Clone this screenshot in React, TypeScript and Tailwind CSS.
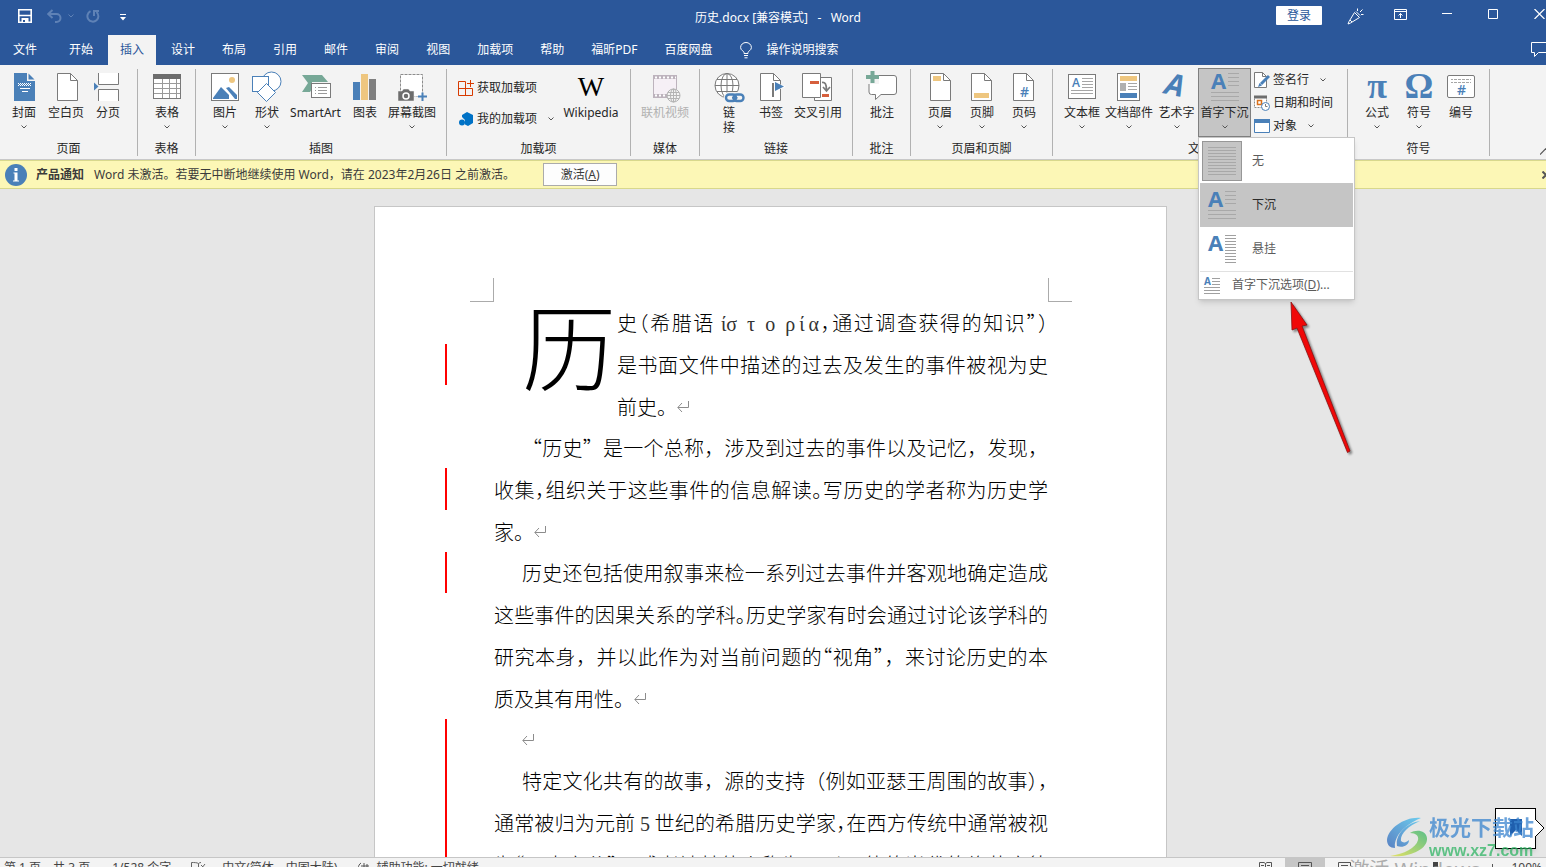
import { ReactNode } from "react";
import clsx from "clsx";

const BLUE = "#4a80b8";
const GRAY = "#7a7a7a";

/* ---------- ribbon icons, 32x32 ---------- */

function Icon32({ children }: { children: ReactNode }) {
  return (
    <svg width="32" height="32" viewBox="0 0 32 32" fill="none" className="block shrink-0 overflow-visible" aria-hidden="true">
      {children}
    </svg>
  );
}

function PageShape({ x = 6 }: { x?: number }) {
  return (
    <g transform={`translate(${x} 2)`} stroke={GRAY}>
      <path d="M.5 .5H13.500L20.500 7.500V27.500H.5Z" fill="#fff" />
      <path d="M13.500 .5V7.500H20.500" />
    </g>
  );
}

const CoverIcon = () => (
  <Icon32>
    <path d="M6 2H19V10H27V30H6Z" fill={BLUE} />
    <path d="M20.500 2.500L26.500 8.500H20.500Z" fill={BLUE} />
    <path d="M10 12.500H23M10 14.500H23" stroke="#fff" strokeDasharray="1 1" />
    <path d="M11 13.500H23" stroke="#fff" strokeDasharray="1 1" />
    <path d="M12 17.500H22M14 20.500H20" stroke="#fff" />
  </Icon32>
);

const BlankIcon = () => (
  <Icon32>
    <PageShape x={7} />
  </Icon32>
);

const BreakIcon = () => (
  <Icon32>
    <path d="M6.500 2V13.500H26.500V2" fill="#fff" stroke={GRAY} />
    <path d="M6.500 30V18.500H26.500V30" fill="#fff" stroke={GRAY} />
    <path d="M2 11.500L6.500 15.500L2 19.500Z" fill={BLUE} />
  </Icon32>
);

const TableIcon = () => (
  <Icon32>
    <rect x="2.500" y="3.500" width="27" height="24" fill="#fff" stroke={GRAY} />
    <rect x="2" y="3" width="28" height="5" fill="#6d6d6d" />
    <path d="M3 12.500H29M3 17.500H29M3 22.500H29M11.500 8V27M18.500 8V27M25.500 8V27" stroke="#9a9a9a" />
  </Icon32>
);

const PictureIcon = () => (
  <Icon32>
    <rect x="2.500" y="2.500" width="27" height="27" fill="#fff" stroke={GRAY} />
    <circle cx="23" cy="9" r="3" fill="#eec67f" />
    <path d="M4 27L12 16L20 24V28H4Z" fill={BLUE} />
    <path d="M17 17L20 16L28 24V28H26Z" fill={BLUE} />
  </Icon32>
);

const ShapesIcon = () => (
  <Icon32>
    <circle cx="20.500" cy="10.500" r="9.500" fill="#fff" stroke={BLUE} />
    <rect x="1.500" y="5.500" width="16" height="15" fill="#fff" stroke={BLUE} />
    <path d="M15.500 12.500L24.500 21.500L15.500 30.500L6.500 21.500Z" fill="#fff" stroke={BLUE} />
  </Icon32>
);

const SmartArtIcon = () => (
  <Icon32>
    <path d="M2 4H22L28 11H12V18L10 21H2L8 12Z" fill="#77a897" />
    <rect x="11.500" y="12.500" width="19" height="14" fill="#fff" stroke={GRAY} />
    <path d="M15 16.500H16M18 16.500H27M15 19.500H16M18 19.500H27M15 22.500H16M18 22.500H27" stroke="#9a9a9a" />
  </Icon32>
);

const ChartIcon = () => (
  <Icon32>
    <rect x="4" y="11" width="7" height="18" fill={BLUE} />
    <rect x="12" y="3" width="7" height="26" fill="#eec67f" />
    <rect x="20" y="8" width="7" height="21" fill="#7f7f7f" />
  </Icon32>
);

const ScreenshotIcon = () => (
  <Icon32>
    <rect x="4.500" y="3.500" width="22" height="22" fill="#fff" stroke="#8c8c8c" strokeDasharray="3 1" />
    <path d="M2 20H6L7.500 18H12.500L14 20H18V30H2Z" fill="#6d6d6d" stroke="#f3f3f3" strokeWidth=".5" />
    <circle cx="10" cy="25" r="3" stroke="#fff" strokeWidth="1.500" />
    <path d="M19 25.500H31V31H21Z" fill="#f3f3f3" />
    <path d="M26.500 21.500V30M22 25.500H31" stroke={BLUE} strokeWidth="2" />
  </Icon32>
);

const VideoIcon = () => (
  <Icon32>
    <rect x="4.500" y="4.500" width="23" height="22" fill="#f6f0f6" stroke="#bdb3bd" />
    <path d="M5 6.500H27M5 24.500H27" stroke="#bdb3bd" strokeWidth="3" />
    <path d="M6 6.500H27M6 24.500H27" stroke="#fff" strokeWidth="2" strokeDasharray="2 2" />
    <circle cx="24.500" cy="24.500" r="6.500" fill="#f3f3f3" stroke="#b3b3b3" />
    <ellipse cx="24.500" cy="24.500" rx="3" ry="6.500" stroke="#b3b3b3" />
    <path d="M18 24.500H31M19 21.500H30M19 27.500H30M24.500 18V31" stroke="#b3b3b3" />
  </Icon32>
);

const LinkIcon = () => (
  <Icon32>
    <circle cx="14" cy="14.500" r="12" fill="#fff" stroke={GRAY} />
    <ellipse cx="14" cy="14.500" rx="6" ry="12" stroke={GRAY} />
    <path d="M2 14.500H26M4 8.500H24M4 20.500H24M14 2.500V26.500" stroke={GRAY} />
    <rect x="11" y="21" width="21" height="11" rx="5" fill="#f3f3f3" />
    <rect x="13" y="23.500" width="10" height="6.500" rx="3.200" stroke={BLUE} strokeWidth="2.400" />
    <rect x="20.500" y="23.500" width="10" height="6.500" rx="3.200" stroke={BLUE} strokeWidth="2.400" />
    <path d="M19 26.800H24.500" stroke={BLUE} strokeWidth="1.500" />
  </Icon32>
);

const BookmarkIcon = () => (
  <Icon32>
    <PageShape x={5} />
    <path d="M18 11L31 15.500L18 21Z" fill="#fff" />
    <path d="M18 12V26" stroke={GRAY} strokeWidth="2" />
    <path d="M20 11L29 15.500L20 20Z" fill={BLUE} />
  </Icon32>
);

const CrossRefIcon = () => (
  <Icon32>
    <path d="M12.500 6.500H29.500V29.500H12.500Z" fill="#fff" stroke={GRAY} />
    <path d="M.5 2.500H18.500V26.500H.5Z" fill="#fff" stroke={GRAY} />
    <rect x="8" y="10" width="9" height="3" fill="#d65f3d" />
    <rect x="20" y="23" width="7" height="3" fill="#d65f3d" />
    <path d="M20 11.500C23 11 24.500 13 24.500 19M21 16L24.500 20L28 16" stroke={GRAY} strokeWidth="1.700" />
  </Icon32>
);

const CommentIcon = () => (
  <Icon32>
    <path
      d="M5 4.500H28A2.500 2.500 0 0 1 30.500 7V21A2.500 2.500 0 0 1 28 23.500H15L9.500 28.500V23.500H5.500A2.500 2.500 0 0 1 3 21V7Z"
      fill="#fff"
      stroke={GRAY}
    />
    <path d="M0 0H13V13H0Z" fill="#f3f3f3" />
    <path d="M6.500 0V12M0 6H13" stroke="#77a897" strokeWidth="4" />
  </Icon32>
);

const HeaderIcon = () => (
  <Icon32>
    <PageShape />
    <rect x="9" y="5" width="8" height="5" fill="#eec67f" />
  </Icon32>
);

const FooterIcon = () => (
  <Icon32>
    <PageShape x={5} />
    <rect x="8" y="22" width="15" height="5" fill="#eec67f" />
  </Icon32>
);

const PageNumberIcon = () => (
  <Icon32>
    <PageShape x={5} />
    <text x="12" y="26" fontSize="14" fontWeight="600" fill={BLUE} className="font-['Open_Sans',sans-serif]">
      #
    </text>
  </Icon32>
);

const TextBoxIcon = () => (
  <Icon32>
    <rect x="2.500" y="3.500" width="27" height="24" fill="#fff" stroke={GRAY} />
    <text x="6" y="16" fontSize="12" fontWeight="600" fill={BLUE} className="font-['Open_Sans',sans-serif]">
      A
    </text>
    <path d="M16 7.500H27M16 10.500H27M16 13.500H27M16 16.500H27M5 19.500H27M5 22.500H27" stroke="#a6a6a6" />
  </Icon32>
);

const PartsIcon = () => (
  <Icon32>
    <rect x="4.500" y="2.500" width="22" height="27" fill="#fff" stroke={GRAY} />
    <rect x="7" y="5" width="17" height="5" fill="#eec67f" />
    <rect x="7" y="12" width="6" height="8" fill="#b0b0b0" />
    <path d="M15 12.500H24M15 15.500H24M15 18.500H24" stroke="#a6a6a6" />
    <rect x="7" y="22" width="17" height="5" fill={BLUE} />
  </Icon32>
);

const WordArtIcon = () => (
  <Icon32>
    <text
      x="4"
      y="25"
      fontSize="30"
      fontWeight="700"
      fontStyle="italic"
      fill={BLUE}
      transform="rotate(12 16 16)"
      className="font-['Open_Sans',sans-serif]"
    >
      A
    </text>
  </Icon32>
);

const DropCapIcon = () => (
  <Icon32>
    <text x="2" y="18" fontSize="22" fontWeight="700" fill={BLUE} className="font-['Open_Sans',sans-serif]">
      A
    </text>
    <path
      d="M19 2.500H30M19 6.500H30M19 10.500H30M19 14.500H30M2 21.500H30M2 25.500H30M2 29.500H30"
      stroke="#a8a8a8"
    />
  </Icon32>
);

const HangingIcon = () => (
  <Icon32>
    <text x="2" y="18" fontSize="22" fontWeight="700" fill={BLUE} className="font-['Open_Sans',sans-serif]">
      A
    </text>
    <path
      d="M19 2.500H30M19 5.500H30M19 8.500H30M19 11.500H30M19 14.500H30M19 17.500H30M19 20.500H30M19 23.500H30M19 26.500H30M19 29.500H30"
      stroke="#a0a0a0"
    />
  </Icon32>
);

const NoneIcon = () => (
  <Icon32>
    <path
      d="M2 2.500H30M2 5.500H30M2 8.500H30M2 11.500H30M2 14.500H30M2 17.500H30M2 20.500H30M2 23.500H30M2 26.500H30M2 29.500H30"
      stroke="#a8a8a8"
    />
  </Icon32>
);

const NumberIcon = () => (
  <Icon32>
    <rect x="2.500" y="4.500" width="27" height="22" rx="1.500" fill="#fff" stroke={GRAY} />
    <path d="M6 8.500H8M9 8.500H26M6 11.500H8M9 11.500H26" stroke="#a6a6a6" strokeDasharray="3 1" />
    <text x="12" y="24" fontSize="14" fontWeight="600" fill={BLUE} className="font-['Open_Sans',sans-serif]">
      #
    </text>
  </Icon32>
);

function GlyphIcon({ children }: { children: string }) {
  return (
    <Icon32>
      <text
        x="16"
        y="27"
        fontSize="36"
        fontWeight="700"
        textAnchor="middle"
        fill={BLUE}
        className="font-['Liberation_Serif',serif]"
      >
        {children}
      </text>
    </Icon32>
  );
}

/* ---------- shared pieces ---------- */

function Chevron({ className }: { className?: string }) {
  return (
    <svg width="6" height="4" viewBox="0 0 6 4" fill="none" className={clsx("shrink-0", className)} aria-hidden="true">
      <path d="M.5 .5L3 3L5.500 .5" stroke="currentColor" />
    </svg>
  );
}

type BigButtonProps = {
  icon: ReactNode;
  label: string;
  width?: string;
  arrow?: boolean;
  disabled?: boolean;
  active?: boolean;
};

function BigButton({ icon, label, width = "w-[42px]", arrow, disabled, active }: BigButtonProps) {
  return (
    <button
      disabled={disabled}
      className={clsx(
        "flex h-[69px] shrink-0 flex-col items-center border pt-0.5",
        width,
        active ? "border-[#7f7f7f] bg-[#c5c5c5]" : "border-transparent",
        disabled && "text-[#b1b1b1]"
      )}
    >
      {icon}
      <span className="mt-px leading-[18px] whitespace-nowrap">{label}</span>
      {arrow && <Chevron className="mt-[3px] text-[#555]" />}
    </button>
  );
}

function SmallButton({ icon, label, arrow, height }: { icon: ReactNode; label: string; arrow?: boolean; height: string }) {
  return (
    <button className={clsx("flex items-center whitespace-nowrap", height)}>
      {icon}
      <span className="ml-[3px]">{label}</span>
      {arrow && <Chevron className="ml-[11px] text-[#555]" />}
    </button>
  );
}

function Group({ title, width, children }: { title: string; width: string; children: ReactNode }) {
  return (
    <section
      aria-label={title}
      className={clsx("relative flex h-[87px] shrink-0 flex-col justify-between border-r border-[#b1b1b1]", width)}
    >
      <div className="-mt-px flex">{children}</div>
      <h2 className="-mb-0.5 text-center leading-[18px]">{title}</h2>
    </section>
  );
}

/* ---------- title bar and tabs ---------- */

function TitleBar() {
  return (
    <header className="flex h-[35px] items-start text-white">
      <div className="flex h-8 flex-1 items-center pl-[18px]">
        <button aria-label="保存">
          <svg width="14" height="14" viewBox="0 0 14 14" fill="none">
            <path d="M.8 .8H13.200V13.200H.8Z" stroke="#fff" strokeWidth="1.600" />
            <path d="M1 6.500H13" stroke="#fff" strokeWidth="1.500" />
            <path d="M3.500 9H10.500V13H3.500Z" fill="#fff" />
            <path d="M5 11H7V13H5Z" fill="#2b579a" />
          </svg>
        </button>
        <button aria-label="撤消" className="ml-[15px] flex items-center gap-1.5 text-[#5f82b6]">
          <svg width="15" height="14" viewBox="0 0 15 14" fill="none">
            <path d="M5.500 1L1.200 5L5.500 9M1.500 5H9.500A4 4 0 0 1 9.500 13H8" stroke="currentColor" strokeWidth="2" />
          </svg>
          <Chevron />
        </button>
        <button aria-label="重复" className="ml-3 text-[#5f82b6]">
          <svg width="14" height="14" viewBox="0 0 14 14" fill="none">
            <path d="M4.500 2.200A5.500 5.500 0 1 0 10.500 3M8 7V2H13" stroke="currentColor" strokeWidth="2" />
          </svg>
        </button>
        <button aria-label="自定义快速访问工具栏" className="ml-5 pt-0.5">
          <svg width="6" height="7" viewBox="0 0 6 7">
            <path d="M0 0H6V1H0ZM0 3H6L3 6.500Z" fill="#fff" />
          </svg>
        </button>
      </div>
      <h1 className="pr-2 leading-[35px] whitespace-pre">历史.docx [兼容模式]{"   -   "}Word</h1>
      <div className="flex h-7 flex-1 items-center justify-end">
        <button className="mt-[3px] h-[19px] w-[46px] rounded-[1px] bg-white leading-[19px] text-[#2b579a]">登录</button>
        <button aria-label="新增功能" className="ml-[25px] pt-1">
          <svg width="17" height="17" viewBox="0 0 17 17" fill="none" stroke="#fff">
            <path d="M7.500 4.500L12.500 9.500L3.500 15L1 16L2 13.500ZM9 3.500L13 7.500M3 12L5 14" />
            <path d="M10.500 3V.5M13 4L15.500 1.500M14 6.500H16.500" />
          </svg>
        </button>
        <button aria-label="功能区显示选项" className="ml-[30px]">
          <svg width="13" height="11" viewBox="0 0 13 11" fill="none" stroke="#fff">
            <path d="M.5 .5H12.500V10.500H.5ZM.5 2.500H12.500M6.500 9V4.500M4.500 6.500L6.500 4.500L8.500 6.500" />
          </svg>
        </button>
        <button aria-label="最小化" className="ml-[35px]">
          <svg width="10" height="10" viewBox="0 0 10 10" stroke="#fff">
            <path d="M0 4.500H10" />
          </svg>
        </button>
        <button aria-label="最大化" className="ml-9">
          <svg width="10" height="10" viewBox="0 0 10 10" fill="none" stroke="#fff">
            <path d="M.5 .5H9.500V9.500H.5Z" />
          </svg>
        </button>
        <button aria-label="关闭" className="ml-9">
          <svg width="12" height="10" viewBox="0 0 12 10" fill="none" stroke="#fff">
            <path d="M.5 0L10.500 10M10.500 0L.5 10" strokeWidth="1.200" />
          </svg>
        </button>
      </div>
    </header>
  );
}

const tabs = ["开始", "插入", "设计", "布局", "引用", "邮件", "审阅", "视图", "加载项", "帮助", "福昕PDF", "百度网盘"];

function TabRow() {
  return (
    <nav className="flex h-[30px] items-stretch text-white">
      <button className="ml-px px-3">文件</button>
      <div className="ml-2 flex gap-[3px]">
        {tabs.map((tab) => (
          <button key={tab} className={clsx("px-3", tab === "插入" && "bg-[#f3f3f3] text-[#2b579a]")}>
            {tab}
          </button>
        ))}
      </div>
      <button className="ml-4 flex items-center">
        <svg width="12" height="17" viewBox="0 0 12 17" fill="none" stroke="#fff">
          <path d="M4 11.500V10.500C4 9 .6 8.500 .6 5.500A5.400 5 0 0 1 11.400 5.500C11.400 8.500 8 9 8 10.500V11.500ZM4 13.500H8M4.500 15.800H7.500" />
        </svg>
        <span className="ml-3.5">操作说明搜索</span>
      </button>
      <button aria-label="批注" className="ml-auto">
        <svg width="15" height="16" viewBox="0 0 15 16" fill="none" stroke="#fff">
          <path d="M15 .5H.5V10.500H3.500V14.500L7.500 10.500H15" />
        </svg>
      </button>
    </nav>
  );
}

/* ---------- ribbon ---------- */

function DropCapMenu() {
  return (
    <div
      role="menu"
      className="absolute top-[68px] left-[145px] z-20 w-[157px] border border-[#c6c6c6] bg-white p-px text-[#5b5b5b] shadow-md"
    >
      <button role="menuitem" className="flex h-11 w-full items-center pl-0.5">
        <span className="flex h-10 w-10 items-center justify-center border border-[#979797] bg-[#c5c5c5]">
          <NoneIcon />
        </span>
        <span className="ml-2.5">无</span>
      </button>
      <button role="menuitem" className="flex h-11 w-full items-center bg-[#c5c5c5] pl-1.5 text-[#2b2b2b]">
        <DropCapIcon />
        <span className="ml-3.5">下沉</span>
      </button>
      <button role="menuitem" className="flex h-11 w-full items-center pl-1.5">
        <HangingIcon />
        <span className="ml-3.5">悬挂</span>
      </button>
      <button role="menuitem" className="flex h-[27px] w-full items-center border-t border-[#e1e1e1] pl-1">
        <svg width="16" height="17" viewBox="0 0 16 17" className="overflow-visible" aria-hidden="true">
          <text x="0" y="8" fontSize="10" fontWeight="700" fill={BLUE} className="font-['Open_Sans',sans-serif]">
            A
          </text>
          <path d="M8 1.500H16M8 4.500H16M8 7.500H16M0 10.500H16M0 13.500H16M0 16.500H16" stroke="#a0a0a0" />
        </svg>
        <span className="ml-3">
          首字下沉选项(<u>D</u>)...
        </span>
      </button>
    </div>
  );
}

function Ribbon() {
  return (
    <div className="relative flex h-[95px] shrink-0 border-b border-[#c8c8c8] bg-[#f3f3f3] pt-1 text-[#262626]">
      <Group title="页面" width="w-[138px]">
        <div className="flex pl-[3px]">
          <BigButton icon={<CoverIcon />} label="封面" arrow />
          <BigButton icon={<BlankIcon />} label="空白页" />
          <BigButton icon={<BreakIcon />} label="分页" />
        </div>
      </Group>
      <Group title="表格" width="w-[58px]">
        <div className="flex pl-2">
          <BigButton icon={<TableIcon />} label="表格" arrow />
        </div>
      </Group>
      <Group title="插图" width="w-[251px]">
        <div className="flex pl-2">
          <BigButton icon={<PictureIcon />} label="图片" arrow />
          <BigButton icon={<ShapesIcon />} label="形状" arrow />
          <BigButton icon={<SmartArtIcon />} label="SmartArt" width="w-[55px]" />
          <BigButton icon={<ChartIcon />} label="图表" width="w-11" />
          <BigButton icon={<ScreenshotIcon />} label="屏幕截图" width="w-[50px]" arrow />
        </div>
      </Group>
      <Group title="加载项" width="w-[184px]">
        <div className="flex w-[109px] flex-col pt-1 pl-[11px]">
          <SmallButton
            height="h-[31px]"
            label="获取加载项"
            icon={
              <svg width="16" height="16" viewBox="0 0 16 16" fill="none" stroke="#d83b01" aria-hidden="true">
                <path d="M7.500 1.500H.5V15.500H14.500V8.500H.5M7.500 1.500V15.500M12.500 0V7M9 3.500H16" />
              </svg>
            }
          />
          <SmallButton
            height="h-[31px]"
            label="我的加载项"
            arrow
            icon={
              <svg width="16" height="16" viewBox="0 0 16 16" fill="#0072c6" aria-hidden="true">
                <path d="M9 1L15 4V12L10 15L7 13.500V9L4 6V4Z" />
                <circle cx="4" cy="11.500" r="3" />
              </svg>
            }
          />
        </div>
        <BigButton
          label="Wikipedia"
          width="w-[70px]"
          icon={
            <span className="flex h-8 items-center font-['Liberation_Serif',serif] text-[28px] leading-8 text-black">W</span>
          }
        />
      </Group>
      <Group title="媒体" width="w-[69px]">
        <div className="flex pl-[7px]">
          <BigButton icon={<VideoIcon />} label="联机视频" width="w-[54px]" disabled />
        </div>
      </Group>
      <Group title="链接" width="w-[153px]">
        <div className="flex pl-2">
          <button className="flex h-[69px] w-[42px] flex-col items-center pt-[3px]">
            <LinkIcon />
            <span className="mt-0.5 w-3 leading-[15px]">链接</span>
          </button>
          <BigButton icon={<BookmarkIcon />} label="书签" />
          <BigButton icon={<CrossRefIcon />} label="交叉引用" width="w-[52px]" />
        </div>
      </Group>
      <Group title="批注" width="w-[58px]">
        <div className="flex pl-2">
          <BigButton icon={<CommentIcon />} label="批注" />
        </div>
      </Group>
      <Group title="页眉和页脚" width="w-[142px]">
        <div className="flex pl-2">
          <BigButton icon={<HeaderIcon />} label="页眉" arrow />
          <BigButton icon={<FooterIcon />} label="页脚" arrow />
          <BigButton icon={<PageNumberIcon />} label="页码" arrow />
        </div>
      </Group>
      <Group title="文本" width="w-[295px]">
        <div className="flex pl-2">
          <BigButton icon={<TextBoxIcon />} label="文本框" arrow />
          <BigButton icon={<PartsIcon />} label="文档部件" width="w-[52px]" arrow />
          <BigButton icon={<WordArtIcon />} label="艺术字" width="w-[43px]" arrow />
          <BigButton icon={<DropCapIcon />} label="首字下沉" width="w-[53px]" arrow active />
        </div>
        <div className="flex flex-col pl-[3px]">
          <SmallButton
            height="h-[23px]"
            label="签名行"
            arrow
            icon={
              <svg width="16" height="16" viewBox="0 0 16 16" fill="none" aria-hidden="true">
                <path d="M.5 .5H8.500L12.500 4.500V15.500H.5Z" fill="#fff" stroke={GRAY} />
                <path d="M8.500 .5V4.500H12.500" stroke={GRAY} />
                <path d="M15 4L7 12" stroke={BLUE} strokeWidth="3" />
                <path d="M5.500 11L4 15L8 13.500Z" fill={BLUE} />
              </svg>
            }
          />
          <SmallButton
            height="h-[23px]"
            label="日期和时间"
            icon={
              <svg width="16" height="16" viewBox="0 0 16 16" fill="none" aria-hidden="true">
                <path d="M.5 1.500H12.500V12.500H.5Z" fill="#fff" stroke="#8c8c8c" strokeDasharray="2 1" />
                <path d="M0 2H13" stroke="#6d6d6d" strokeWidth="3" />
                <path d="M3.500 5.500H7.500V9.500H3.500Z" stroke="#d9711c" strokeWidth="1.500" />
                <circle cx="11.500" cy="11.500" r="4" fill="#fff" stroke={BLUE} />
                <path d="M11.500 9V11.500H13.500" stroke={GRAY} />
              </svg>
            }
          />
          <SmallButton
            height="h-[23px]"
            label="对象"
            arrow
            icon={
              <svg width="16" height="14" viewBox="0 0 16 14" fill="none" aria-hidden="true">
                <path d="M.5 .5H15.500V13.500H.5Z" fill="#fff" stroke={BLUE} />
                <path d="M0 2H16" stroke={BLUE} strokeWidth="4" />
              </svg>
            }
          />
        </div>
        <DropCapMenu />
      </Group>
      <Group title="符号" width="w-[142px]">
        <div className="flex pl-2">
          <BigButton icon={<GlyphIcon>π</GlyphIcon>} label="公式" arrow />
          <BigButton icon={<GlyphIcon>Ω</GlyphIcon>} label="符号" arrow />
          <BigButton icon={<NumberIcon />} label="编号" />
        </div>
      </Group>
      <button aria-label="折叠功能区" className="mt-auto ml-auto pb-1">
        <svg width="6" height="7" viewBox="0 0 6 7" fill="none" stroke="#555">
          <path d="M0 6.500L6 .5" strokeWidth="1.200" />
        </svg>
      </button>
    </div>
  );
}

function NoticeBar() {
  return (
    <div className="flex h-[29px] shrink-0 items-center border-y border-[#d8d88c] bg-[#fcf7b6] pl-[5px] text-[#3b3b3b]">
      <svg width="22" height="22" viewBox="0 0 22 22" aria-hidden="true">
        <circle cx="11" cy="11" r="11" fill={BLUE} />
        <path d="M9.500 4H12.500V7H9.500ZM8.500 8.500H12.500V16.500H14V17.500H8V16.500H9.500V9.500H8.500Z" fill="#fff" />
      </svg>
      <strong className="ml-[9px] font-bold">产品通知</strong>
      <span className="ml-2.5">Word 未激活。若要无中断地继续使用 Word，请在 2023年2月26日 之前激活。</span>
      <button className="ml-7 h-[23px] w-[74px] border border-[#ababab] bg-[#fdfdfd] leading-[21px]">
        激活(<u>A</u>)
      </button>
      <button aria-label="关闭" className="ml-auto">
        <svg width="4" height="8" viewBox="0 0 4 8" fill="none" stroke="#555">
          <path d="M.5 .5L4 4L.5 7.500" strokeWidth="2" />
        </svg>
      </button>
    </div>
  );
}

/* ---------- document ---------- */

// half-width punctuation
function H({ children }: { children: string }) {
  return <span className="[font-feature-settings:'halt']">{children}</span>;
}

function Serif({ children }: { children: string }) {
  return <span className="font-['Liberation_Serif',serif] font-normal text-[#333]">{children}</span>;
}

function Line({ children, full, indent }: { children?: ReactNode; full?: boolean; indent?: boolean }) {
  return (
    <span className={clsx("block h-[42px] whitespace-nowrap", full && "text-justify [text-align-last:justify]", indent && "pl-7")}>
      {children}
    </span>
  );
}

function Mark() {
  return (
    <svg width="12" height="11" viewBox="0 0 12 11" fill="none" stroke="#8c8c8c" className="inline align-[3px]" aria-hidden="true">
      <path d="M11.500 0V6.500H1M5 2L.8 6.500L5 11" />
    </svg>
  );
}

// change bar in the left margin
function ChangeBar({ className }: { className: string }) {
  return <span className={clsx("absolute -left-[49px] w-0.5 bg-[#f00]", className)} />;
}

function Document() {
  return (
    <main className="min-h-0 flex-1 overflow-hidden bg-[#e6e6e6] pt-[17px] pr-[5px]">
      <article className="mx-auto h-[1122px] w-[793px] border border-[#c6c6c6] bg-white pt-[71px] pr-[94px] pl-[95px] font-['Noto_Sans_CJK_SC',sans-serif] text-xl leading-[42px] font-light text-black">
        <div className="flex justify-between">
          <span className="h-6 w-6 border-r border-b border-[#ababab]" />
          <span className="h-6 w-6 border-b border-l border-[#ababab]" />
        </div>
        <div className="px-6">
          <div className="relative flex pl-7">
            <ChangeBar className="top-[42px] h-[41px]" />
            <span className="w-[95px] shrink-0 text-[94px] leading-[82px]">历</span>
            <p className="flex-1">
              <Line full>
                史<H>（</H>希腊语 <Serif>{"\u03AFσ\u2002τ\u2002ο\u2002ρ\u2009\u03AF\u2009α"}</Serif>
                <H>，</H>通过调查获得的知识<H>”）</H>
              </Line>
              <Line full>是书面文件中描述的过去及发生的事件被视为史</Line>
              <Line>
                前史。
                <Mark />
              </Line>
            </p>
          </div>
          <p className="relative -mt-px">
            <ChangeBar className="top-[41px] h-[42px]" />
            <Line full indent>
              “历史”是一个总称，涉及到过去的事件以及记忆，发现，
            </Line>
            <Line full>
              收集<H>，</H>组织关于这些事件的信息解读<H>。</H>写历史的学者称为历史学
            </Line>
            <Line>
              家。
              <Mark />
            </Line>
          </p>
          <p className="relative -mt-px">
            <ChangeBar className="top-0 h-[41px]" />
            <Line full indent>
              历史还包括使用叙事来检一系列过去事件并客观地确定造成
            </Line>
            <Line full>
              这些事件的因果关系的学科<H>。</H>历史学家有时会通过讨论该学科的
            </Line>
            <Line full>
              研究本身，并以此作为对当前问题的<H>“</H>视角<H>”</H>，来讨论历史的本
            </Line>
            <Line>
              质及其有用性。
              <Mark />
            </Line>
          </p>
          <p className="relative -mt-px">
            <ChangeBar className="top-0 h-[168px]" />
            <Line indent>
              <Mark />
            </Line>
          </p>
          <p className="-mt-px">
            <Line full indent>
              特定文化共有的故事，源的支持（例如亚瑟王周围的故事<H>），</H>
            </Line>
            <Line full>
              通常被归为元前 <Serif>5</Serif> 世纪的希腊历史学家<H>，</H>在西方传统中通常被视
            </Line>
            <Line full>
              为<H>“</H>历史之父”，或者被其他人称为，以及他的当代的修昔底德
            </Line>
          </p>
        </div>
      </article>
    </main>
  );
}

function StatusBar() {
  return (
    <footer className="relative h-2.5 shrink-0 overflow-hidden border-t border-[#c6c6c6] bg-[#f3f3f3] text-[#444]">
      <div className="flex h-5 items-center pl-1 leading-5 whitespace-nowrap">
        <span>第 1 页，共 3 页</span>
        <span className="ml-[22px]">1/528 个字</span>
        <svg width="15" height="13" viewBox="0 0 15 13" fill="none" stroke="#666" className="ml-5" aria-hidden="true">
          <path d="M7.500 12V1.500C6 .5 3 .5 .5 .5V11.500M7.500 1.500C8.500 .8 9 .5 10 .5M10 3L14 7M14 2L10 7" />
        </svg>
        <span className="ml-4">中文(简体，中国大陆)</span>
        <svg width="13" height="12" viewBox="0 0 13 12" fill="none" stroke="#555" className="ml-5" aria-hidden="true">
          <path d="M4 1A6 6 0 0 0 4 11M7 1V9M4 4H12M10 2V6" />
        </svg>
        <span className="ml-1.5">辅助功能: 一切就绪</span>
        <div className="ml-auto flex h-full items-center">
          <button aria-label="阅读视图" className="flex h-full w-10 items-center justify-center">
            <svg width="13" height="13" viewBox="0 0 13 13" fill="none" stroke="#555">
              <path d="M6.500 12V1.500L5 .5H.5V11.500H12.500V.5H8L6.500 1.500M2 3.500H5M2 5.500H5M8 3.500H11M8 5.500H11" />
            </svg>
          </button>
          <button aria-label="页面视图" className="flex h-full w-10 items-center justify-center bg-[#c6c6c6]">
            <svg width="14" height="13" viewBox="0 0 14 13" fill="none" stroke="#555">
              <path d="M.5 .5H13.500V12.500H.5ZM3 3.500H11M3 5.500H11M3 7.500H11" />
            </svg>
          </button>
          <button aria-label="Web 版式视图" className="flex h-full w-10 items-center justify-center">
            <svg width="14" height="13" viewBox="0 0 14 13" fill="none" stroke="#555">
              <path d="M12.500 4V.5H.5V11.500H5M3 3.500H10M3 5.500H8" />
            </svg>
          </button>
          <input
            type="range"
            aria-label="缩放"
            defaultValue={50}
            className="ml-5 h-3 w-[100px] appearance-none bg-transparent [&::-webkit-slider-thumb]:h-3 [&::-webkit-slider-thumb]:w-[5px] [&::-webkit-slider-thumb]:appearance-none [&::-webkit-slider-thumb]:bg-[#444]"
          />
          <button aria-label="放大" className="ml-[3px]">
            <svg width="9" height="9" viewBox="0 0 9 9" stroke="#555">
              <path d="M4.500 0V9M0 4.500H9" />
            </svg>
          </button>
          <span className="mr-1 ml-3.5">100%</span>
        </div>
      </div>
      <span className="absolute top-0 right-[66px] text-[20px] leading-6 text-[#8c8c8c]/70">激活 Windows</span>
    </footer>
  );
}

/* ---------- things that float over the window ---------- */

function RedArrow() {
  return (
    <svg
      width="70"
      height="160"
      viewBox="0 0 70 160"
      className="pointer-events-none absolute top-[300px] left-[1286px] z-30 drop-shadow-[2px_2px_1px_rgba(0,0,0,0.45)]"
      aria-hidden="true"
    >
      <path d="M5 2L21 25L16 26L64 151L61.500 152.500L11 28L6 30Z" fill="#f00808" stroke="#8a1010" strokeWidth=".8" />
    </svg>
  );
}

function SiteBadge() {
  return (
    <div className="pointer-events-none absolute right-0 bottom-2 z-30 h-[52px] w-[160px]">
      <div className="absolute top-px right-2.5 flex h-[41px] w-[41px] items-start justify-center border border-black bg-white pt-2.5 shadow-md">
        <svg width="12" height="17" viewBox="0 0 12 17" aria-hidden="true">
          <path d="M0 0H12V17L6 11L0 17Z" fill="#1f5fae" />
        </svg>
      </div>
      <svg width="10" height="18" viewBox="0 0 10 18" className="absolute top-3 right-px" aria-hidden="true">
        <path d="M0 0L9 9L0 18" fill="#fff" stroke="#000" />
      </svg>
      <div className="relative flex opacity-75">
        <svg width="43" height="42" viewBox="0 0 43 42" className="mt-2.5 shrink-0" aria-hidden="true">
          <defs>
            <linearGradient id="swirlTop" x1="1" y1="0" x2="0" y2="1">
              <stop offset="0" stopColor="#45c3f0" />
              <stop offset="1" stopColor="#2c62b8" />
            </linearGradient>
            <linearGradient id="swirlBottom" x1="1" y1="0" x2="0" y2="1">
              <stop offset="0" stopColor="#2fb36a" />
              <stop offset="1" stopColor="#e2e03a" />
            </linearGradient>
          </defs>
          <path
            d="M35 1C20 -1 2 11 1 23C1 28 4 31 9 31C8 22 14 10 35 1ZM11 29C16 31 23 29 23 23C20 26 17 26 15 24C14 17 22 9 34 4C20 6 9 18 11 29Z"
            fill="url(#swirlTop)"
          />
          <path d="M24 16C30 12 40 13 41 21C42 32 24 41 4 39C18 37 30 31 32 23C33 19 30 16 24 16Z" fill="url(#swirlBottom)" />
        </svg>
        <div className="whitespace-nowrap">
          <p className="pt-2 text-[21px] leading-6 font-bold text-[#3b85cf]">极光下载站</p>
          <p className="pt-0.5 font-['Liberation_Sans',sans-serif] text-base leading-5 font-bold text-[#31b565]">www.xz7.com</p>
        </div>
      </div>
    </div>
  );
}

export default function App() {
  return (
    <div
      lang="zh-CN"
      className="relative flex h-screen flex-col overflow-hidden bg-[#e6e6e6] font-['Noto_Sans','Noto_Sans_CJK_SC',sans-serif] text-xs"
    >
      <div className="shrink-0 bg-[#2b579a]">
        <TitleBar />
        <TabRow />
      </div>
      <Ribbon />
      <NoticeBar />
      <Document />
      <StatusBar />
      <RedArrow />
      <SiteBadge />
    </div>
  );
}
